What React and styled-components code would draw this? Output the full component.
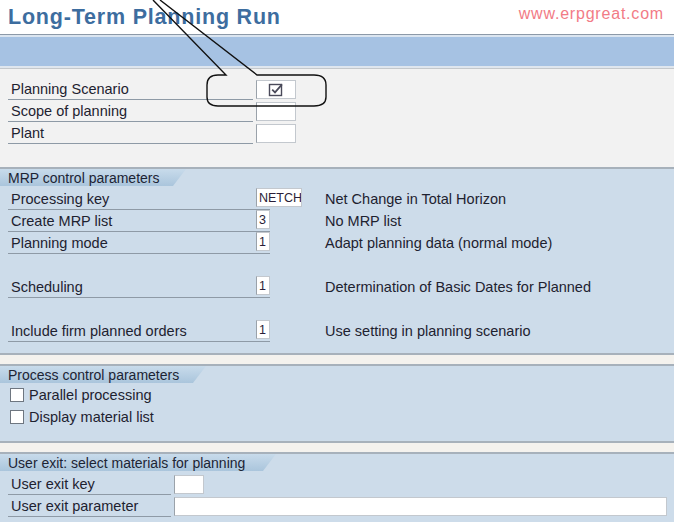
import styled, { createGlobalStyle } from "styled-components";

const GlobalStyle = createGlobalStyle`
  html, body {
    margin: 0;
    padding: 0;
    background: #ffffff;
  }
  body {
    font-family: "Liberation Sans", Arial, sans-serif;
  }
`;

const mrpRows = [
  { label: "Processing key", value: "NETCH", width: 46, text: "Net Change in Total Horizon" },
  { label: "Create MRP list", value: "3", width: 14, text: "No MRP list" },
  { label: "Planning mode", value: "1", width: 14, text: "Adapt planning data (normal mode)" },
  null,
  { label: "Scheduling", value: "1", width: 14, text: "Determination of Basic Dates for Planned" },
  null,
  { label: "Include firm planned orders", value: "1", width: 14, text: "Use setting in planning scenario" },
];

const CheckIcon = () => (
  <svg width="16" height="15" viewBox="0 0 16 15">
    <rect x="1.5" y="2.5" width="12" height="11" fill="none" stroke="#4a4a5a" strokeWidth="1.4" />
    <path d="M4.2 7.6 L7 10.4 L14 2.4" fill="none" stroke="#4a4a5a" strokeWidth="1.7" />
  </svg>
);

const Callout = () => (
  <CalloutLayer width="674" height="522" viewBox="0 0 674 522">
    <path
      d="M160 0 L257 75 L314 75 Q326 75 326 85 L326 97 Q326 106 314 106 L218 106 Q207 106 207 97 L207 85 Q207 75 218 75 L226 75 L153 0"
      fill="none"
      stroke="#111"
      strokeWidth="1.4"
    />
  </CalloutLayer>
);

const App = () => {
  return (
    <Page>
      <GlobalStyle />
      <Header>
        <Title>Long-Term Planning Run</Title>
        <Watermark>www.erpgreat.com</Watermark>
      </Header>
      <Toolbar />
      <ScenarioArea>
        <FieldRow>
          <Label $width={245}>Planning Scenario</Label>
          <Input $width={40}><CheckIcon /></Input>
        </FieldRow>
        <FieldRow>
          <Label $width={245}>Scope of planning</Label>
          <Input $width={40} />
        </FieldRow>
        <FieldRow>
          <Label $width={245}>Plant</Label>
          <Input $width={40} />
        </FieldRow>
      </ScenarioArea>

      <Section>
        <Tab $width={186}>MRP control parameters</Tab>
        <Rows $pad="2px 0 11px">
          {mrpRows.map((row, i) =>
            row ? (
              <FieldRow key={i}>
                <LinedField>
                  <PlainLabel>{row.label}</PlainLabel>
                  <Input $width={row.width} $text>{row.value}</Input>
                </LinedField>
                <Description>{row.text}</Description>
              </FieldRow>
            ) : (
              <FieldRow key={i} />
            )
          )}
        </Rows>
      </Section>

      <Section $spaced>
        <Tab $width={206}>Process control parameters</Tab>
        <Rows $pad="1px 0 13px">
          <CheckRow><Box />Parallel processing</CheckRow>
          <CheckRow><Box />Display material list</CheckRow>
        </Rows>
      </Section>

      <Section $spaced>
        <Tab $width={276}>User exit: select materials for planning</Tab>
        <Rows $pad="2px 0 8px">
          <FieldRow>
            <Label $width={163}>User exit key</Label>
            <Input $width={30} />
          </FieldRow>
          <FieldRow>
            <Label $width={163}>User exit parameter</Label>
            <Input $width={493} />
          </FieldRow>
        </Rows>
      </Section>
      <Callout />
    </Page>
  );
};

export default App;

const Page = styled.div`
  position: relative;
  width: 674px;
  height: 522px;
  overflow: hidden;
  background: #f4f2ee;
`;

const Header = styled.div`
  height: 34px;
  background: #ffffff;
  display: flex;
  justify-content: space-between;
  align-items: center;
  padding: 0 10px 0 8px;
`;

const Title = styled.h1`
  margin: 0;
  font-size: 21.5px;
  font-weight: bold;
  color: #3d6d9f;
  letter-spacing: 0.8px;
`;

const Watermark = styled.span`
  font-size: 16px;
  color: #f27b86;
  letter-spacing: 0.8px;
  margin-top: -6px;
`;

const Toolbar = styled.div`
  height: 35px;
  background: linear-gradient(
    to bottom,
    #8c99a8 0 1px,
    #dbe5f0 1px 3px,
    #a6c2e3 3px 32px,
    #dfe6ee 32px 34px,
    #c4c8cc 34px 35px
  );
`;

const ScenarioArea = styled.div`
  height: 98px;
  box-sizing: border-box;
  padding-top: 9px;
  background: #f2f2f2;
`;

const FieldRow = styled.div`
  height: 22px;
  display: flex;
  align-items: center;
  padding-left: 8px;
  font-size: 14.5px;
  color: #1e2230;
`;

const Label = styled.div`
  width: ${({ $width }) => $width}px;
  height: 22px;
  flex-shrink: 0;
  box-sizing: border-box;
  padding: 3px 0 0 3px;
  border-bottom: 1px solid #8e9aa6;
  margin-right: 3px;
  white-space: nowrap;
`;

const LinedField = styled.div`
  width: 262px;
  height: 22px;
  flex-shrink: 0;
  box-sizing: border-box;
  display: flex;
  align-items: flex-start;
  border-bottom: 1px solid #8e9aa6;
`;

const PlainLabel = styled.div`
  width: 248px;
  flex-shrink: 0;
  box-sizing: border-box;
  padding: 3px 0 0 3px;
  white-space: nowrap;
`;

const Input = styled.div`
  width: ${({ $width }) => $width}px;
  height: 19px;
  flex-shrink: 0;
  box-sizing: border-box;
  background: #ffffff;
  border: 1px solid #c3c8ce;
  border-left-color: #9aa2aa;
  display: flex;
  align-items: center;
  justify-content: ${({ $text }) => ($text ? "flex-start" : "center")};
  padding-left: ${({ $text }) => ($text ? "2px" : "0")};
  font-size: 12.5px;
  color: #2a1e38;
  overflow: hidden;
`;

const Description = styled.div`
  margin-left: 55px;
  white-space: nowrap;
`;

const Section = styled.div`
  margin-top: ${({ $spaced }) => ($spaced ? "9px" : "0")};
  background: #cddcea;
  border-top: 2px solid #a7b1bb;
  border-bottom: 2px solid #a7b1bb;
`;

const Tab = styled.div`
  width: ${({ $width }) => $width}px;
  height: 17px;
  box-sizing: border-box;
  padding: 1px 0 0 8px;
  font-size: 14px;
  color: #1c2434;
  background: linear-gradient(to bottom, #c8dbeb, #aac5dc);
  clip-path: polygon(0 0, 100% 0, calc(100% - 13px) 100%, 0 100%);
  white-space: nowrap;
`;

const Rows = styled.div`
  padding: ${({ $pad }) => $pad};
`;

const CheckRow = styled.div`
  height: 22px;
  display: flex;
  align-items: center;
  gap: 5px;
  padding-left: 10px;
  font-size: 14.5px;
  color: #1e2230;
`;

const Box = styled.span`
  width: 14px;
  height: 14px;
  box-sizing: border-box;
  background: #ffffff;
  border: 1px solid #6e7680;
`;

const CalloutLayer = styled.svg`
  position: absolute;
  top: 0;
  left: 0;
  pointer-events: none;
`;
